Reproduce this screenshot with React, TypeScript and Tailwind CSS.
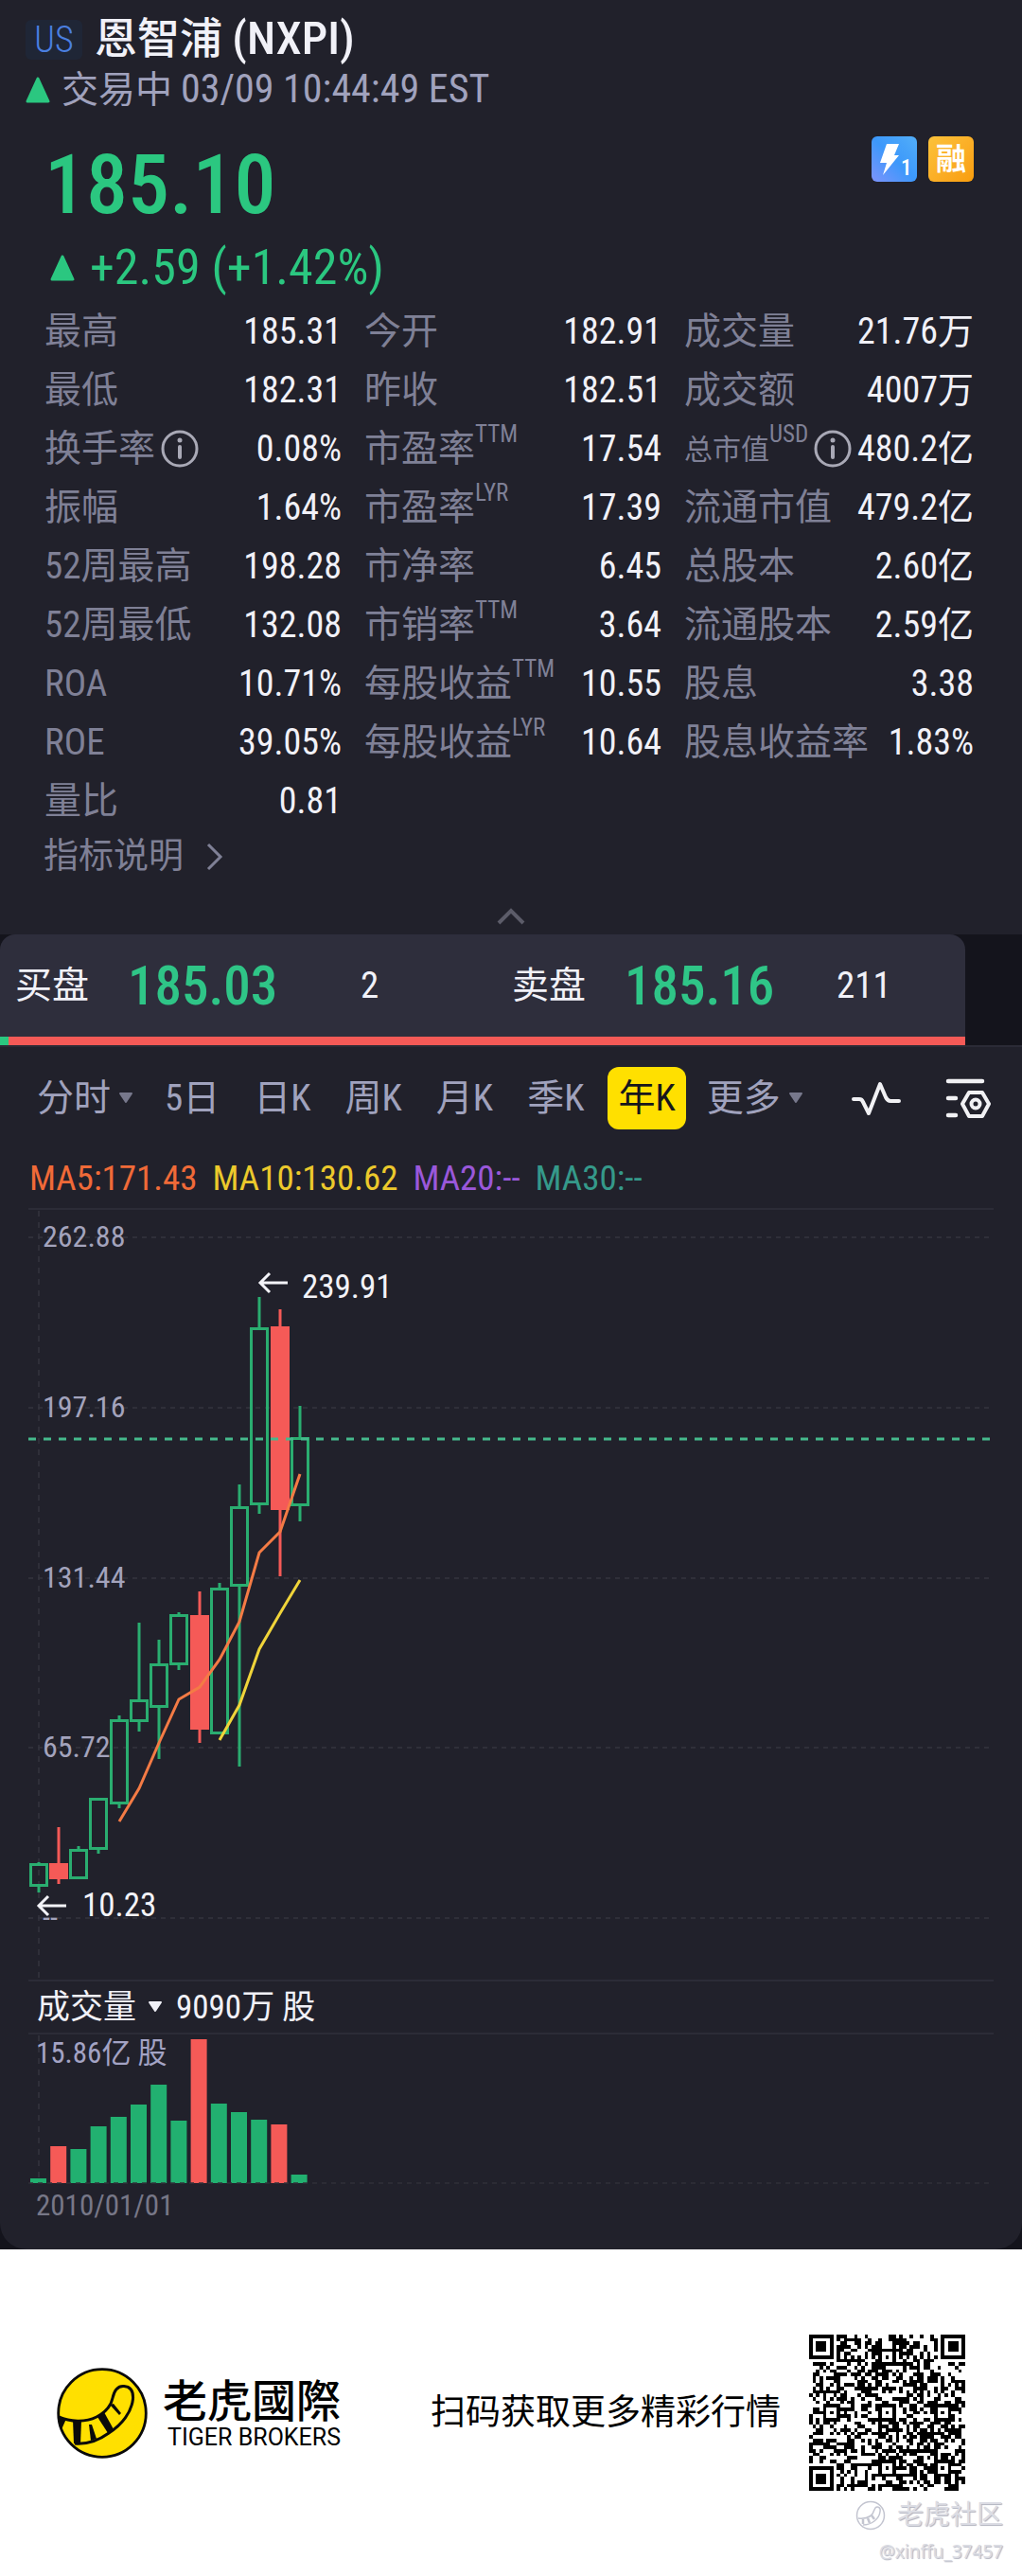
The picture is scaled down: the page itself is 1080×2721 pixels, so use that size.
type Metric = { label: string; value: string; sup?: string; info?: boolean; small?: boolean };

const metrics: Metric[] = [
  { label: "最高", value: "185.31" },
  { label: "今开", value: "182.91" },
  { label: "成交量", value: "21.76万" },
  { label: "最低", value: "182.31" },
  { label: "昨收", value: "182.51" },
  { label: "成交额", value: "4007万" },
  { label: "换手率", value: "0.08%", info: true },
  { label: "市盈率", value: "17.54", sup: "TTM" },
  { label: "总市值", value: "480.2亿", sup: "USD", info: true, small: true },
  { label: "振幅", value: "1.64%" },
  { label: "市盈率", value: "17.39", sup: "LYR" },
  { label: "流通市值", value: "479.2亿" },
  { label: "52周最高", value: "198.28" },
  { label: "市净率", value: "6.45" },
  { label: "总股本", value: "2.60亿" },
  { label: "52周最低", value: "132.08" },
  { label: "市销率", value: "3.64", sup: "TTM" },
  { label: "流通股本", value: "2.59亿" },
  { label: "ROA", value: "10.71%" },
  { label: "每股收益", value: "10.55", sup: "TTM" },
  { label: "股息", value: "3.38" },
  { label: "ROE", value: "39.05%" },
  { label: "每股收益", value: "10.64", sup: "LYR" },
  { label: "股息收益率", value: "1.83%" },
  { label: "量比", value: "0.81" },
];

const tabs = ["5日", "日K", "周K", "月K", "季K", "年K"];

const UP = "#2aad70";
const DOWN = "#f55a57";

/* x, high, body top, body bottom, low, rising */
const candles: [number, number, number, number, number, boolean][] = [
  [41, 691, 692, 716, 723, true],
  [62, 654, 692, 708, 714, false],
  [83, 674, 677, 708, 708, true],
  [104, 623, 623, 677, 682, true],
  [126, 536, 540, 629, 634, true],
  [147, 438, 519, 542, 553, true],
  [168, 456, 481, 527, 582, true],
  [189, 427, 429, 482, 488, true],
  [211, 405, 430, 550, 565, false],
  [232, 396, 401, 555, 555, true],
  [253, 292, 315, 399, 590, true],
  [274, 94, 126, 313, 323, true],
  [296, 107, 125, 318, 389, false],
  [317, 209, 242, 314, 331, true],
];

/* bar top, rising; all bars stand on y = 159 */
const volumes: [number, boolean][] = [
  [154, true], [120, false], [123, true], [99, true], [89, true], [76, true], [55, true],
  [93, true], [7, false], [75, true], [84, true], [92, true], [97, false], [150, true],
];

const gridLines: [number, string][] = [
  [31, "262.88"],
  [211, "197.16"],
  [391, "131.44"],
  [570, "65.72"],
  [750, "--"],
];

function TriangleUp({ className }: { className?: string }) {
  return (
    <svg viewBox="0 0 26 28" className={className} aria-hidden="true">
      <path d="M13 2 L24 26 H2 Z" fill="#2bc780" stroke="#2bc780" strokeWidth="3" strokeLinejoin="round" />
    </svg>
  );
}

function TriangleDown({ className }: { className?: string }) {
  return (
    <svg viewBox="0 0 16 12" className={className} aria-hidden="true">
      <path d="M2 1 H14 L8 10 Z" fill="currentColor" stroke="currentColor" strokeWidth="2" strokeLinejoin="round" />
    </svg>
  );
}

function InfoIcon() {
  return (
    <svg viewBox="0 0 40 40" className="size-10 shrink-0" fill="none" stroke="#a9a9b6" aria-hidden="true">
      <circle cx="20" cy="20" r="18" strokeWidth="3" />
      <circle cx="20" cy="11" r="2.5" fill="#a9a9b6" stroke="none" />
      <path d="M20 18 V29" strokeWidth="4" strokeLinecap="round" />
    </svg>
  );
}

function MetricCell({ m }: { m: Metric }) {
  return (
    <div className="flex h-[62px] items-center justify-between whitespace-nowrap">
      <dt className="flex h-full items-center text-[#7f8096]">
        <span className={m.small ? "text-[30px]" : "text-[39px]"}>{m.label}</span>
        {m.sup && <sup className="top-0 self-start text-[25px] leading-8">{m.sup}</sup>}
        {m.info && (
          <button type="button" aria-label={m.label + "说明"} className="ml-1.5">
            <InfoIcon />
          </button>
        )}
      </dt>
      <dd className="text-[38px] text-[#f1f1f8]">{m.value}</dd>
    </div>
  );
}

function PriceChart() {
  return (
    <svg viewBox="0 0 1080 817" className="block h-auto w-full" role="img" aria-label="年K">
      <g stroke="#35353f" strokeWidth="1.5" fill="none">
        <path d="M30 1 H1050 M30 816 H1050" stroke="#30303c" />
        <path d="M41 3 V816" strokeDasharray="6 6" />
        {gridLines.map(([y]) => (
          <path key={y} d={`M30 ${y} H1050`} strokeDasharray="5 5" />
        ))}
      </g>
      <g fill="#a3a3bc" fontSize="32">
        {gridLines.map(([y, t]) => (
          <text key={y} x="45" y={y + 10}>{t}</text>
        ))}
      </g>
      {candles.map(([x, high, top, bottom, low, up]) => (
        <g key={x} stroke={up ? UP : DOWN} strokeWidth="3" fill={up ? "none" : DOWN}>
          <path d={`M${x} ${high} V${top} M${x} ${bottom} V${low}`} />
          <rect x={x - 8.5} y={top + 1.5} width="17" height={bottom - top - 2} />
        </g>
      ))}
      <path d="M30 244 H1050" stroke="#45b98c" strokeWidth="3" strokeDasharray="8 8" />
      <polyline
        points="126,648 147,613 168,565 189,519 211,506 232,477 253,437 274,364 296,342 317,281"
        fill="none" stroke="#f47b45" strokeWidth="3"
      />
      <polyline points="232,562 253,525 274,466 296,428 317,393" fill="none" stroke="#f0d43a" strokeWidth="3" />
      <g fill="none" stroke="#f3f3f8" strokeWidth="3">
        <path d="M304 79 H275 M285 69 L275 79 L285 89" />
        <path d="M70 737 H41 M51 727 L41 737 L51 747" />
      </g>
      <g fill="#f3f3f8" fontSize="35">
        <text x="319" y="95">239.91</text>
        <text x="87" y="748">10.23</text>
      </g>
    </svg>
  );
}

function VolumeChart() {
  return (
    <svg viewBox="0 0 1080 163" className="block h-auto w-full" role="img" aria-label="成交量">
      <g stroke="#35353f" strokeWidth="1.5" fill="none">
        <path d="M30 1 H1050" stroke="#30303c" />
        <path d="M41 3 V159" strokeDasharray="6 6" />
      </g>
      {volumes.map(([top, up], i) => (
        <rect key={i} x={32 + i * 21.2} y={top} width="17" height={159 - top} fill={up ? "#22b070" : DOWN} />
      ))}
      <path d="M30 159 H1050" stroke="#30303a" strokeWidth="1.5" strokeDasharray="5 5" />
      <text x="38" y="32" fontSize="31" fill="#a3a3c4">15.86亿 股</text>
    </svg>
  );
}

const QR_SIZE = 45;

function qrModule(r: number, c: number): boolean {
  const far = QR_SIZE - 7;
  for (const [fr, fc] of [[0, 0], [0, far], [far, 0]]) {
    const dr = r - fr;
    const dc = c - fc;
    if (dr >= -1 && dr <= 7 && dc >= -1 && dc <= 7) {
      const d = Math.max(Math.abs(dr - 3), Math.abs(dc - 3));
      return d === 3 || d <= 1;
    }
  }
  for (const ar of [6, 22, 38]) {
    for (const ac of [6, 22, 38]) {
      if ((ar === 6 && ac !== 22) || (ac === 6 && ar !== 22)) continue;
      const d = Math.max(Math.abs(r - ar), Math.abs(c - ac));
      if (d <= 2) return d !== 1;
    }
  }
  if (r === 6) return c % 2 === 0;
  if (c === 6) return r % 2 === 0;
  let h = Math.imul(r * 61 + 17, 374761393) ^ Math.imul(c * 37 + 5, 668265263);
  h = Math.imul(h ^ (h >>> 13), 1274126177);
  return ((h ^ (h >>> 16)) & 255) < 130;
}

function QrCode() {
  let d = "";
  for (let r = 0; r < QR_SIZE; r++) {
    for (let c = 0; c < QR_SIZE; c++) {
      if (qrModule(r, c)) d += `M${c} ${r}h1v1h-1z`;
    }
  }
  return (
    <svg viewBox="0 0 45 45" className="w-[165px] shrink-0" shapeRendering="crispEdges" role="img" aria-label="二维码">
      <path d={d} fill="#000" />
    </svg>
  );
}

function TigerLogo() {
  return (
    <svg viewBox="0 0 96 96" className="size-24 shrink-0" aria-hidden="true">
      <circle cx="48" cy="48" r="46.3" fill="#ffe000" stroke="#0a0a0a" strokeWidth="2.8" />
      <path
        d="M2 52 C14 57 30 58 42 52 C52 47 57 41 59 32 C61 23 65 19 71 19.5 C78 20 81 25 80.5 33 C79 47 69 60 55 69 C44 77 31 81 19 80"
        fill="none" stroke="#0a0a0a" strokeWidth="3" strokeLinejoin="round"
      />
      <path d="M2 51 L10 54 L6 63 L5 66 Z" fill="#0a0a0a" />
      <path d="M17 55 L26 56 L25 81 L18 80 Z" fill="#0a0a0a" />
      <path d="M34 60 L37 60 L42 75 L36 77 Z" fill="#0a0a0a" />
      <path d="M43 52 L50 47 L60 65 L54 69 Z" fill="#0a0a0a" />
      <path d="M56 39 L60 38 L68 48 L66 50 Z" fill="#0a0a0a" />
    </svg>
  );
}

export default function App() {
  return (
    <main className="bg-[#14141c] font-['Roboto_Condensed','Noto_Sans_CJK_SC',sans-serif] text-[#f1f1f8]">
      <div className="rounded-b-[28px] bg-[#21212b]">
        <header className="pl-[27px]">
          <div className="flex h-[66px] items-center gap-[13px] pt-[17px]">
            <span className="flex h-[42px] w-[60px] items-center justify-center rounded-md bg-[#1f2636] text-[38px] leading-none font-light text-[#4a7fe0]">US</span>
            <h1 className="text-[45px] font-medium">
              恩智浦 <span className="text-[49px] leading-none">(NXPI)</span>
            </h1>
          </div>
          <p className="flex h-[58px] items-center gap-3 text-[39px] text-[#a0a2bd]">
            <TriangleUp className="w-[26px]" />
            <span>
              交易中 <span className="text-[42px] leading-none">03/09 10:44:49 EST</span>
            </span>
          </p>
        </header>

        <section className="flex items-start justify-between pt-5 pr-[51px] pl-[47px] text-[#2bc780]">
          <div>
            <p className="text-[88px] leading-[102px] font-medium">185.10</p>
            <p className="flex h-[73px] items-center gap-4 pl-1.5 text-[52px]">
              <TriangleUp className="w-[26px]" />
              <span>+2.59 (+1.42%)</span>
            </p>
          </div>
          <div className="flex gap-3">
            <svg viewBox="0 0 48 48" className="size-12" role="img" aria-label="Level 1">
              <defs>
                <linearGradient id="lv" x1="0" y1="1" x2="1" y2="0">
                  <stop offset="0" stopColor="#7d93fb" />
                  <stop offset="0.5" stopColor="#3c98fb" />
                  <stop offset="1" stopColor="#52aef8" />
                </linearGradient>
              </defs>
              <rect width="48" height="48" rx="6" fill="url(#lv)" />
              <path d="M16 8 H29 L24 20 H29 L12 41 L16 28 H9 Z" fill="#fff" />
              <text x="31" y="41" fontSize="23" fontWeight="500" fill="#fff">1</text>
            </svg>
            <span className="flex size-12 items-center justify-center rounded-md bg-linear-to-br from-[#fcc23a] to-[#f99d0a] text-[32px] leading-none font-bold text-white">融</span>
          </div>
        </section>

        <dl className="grid grid-cols-[314fr_314fr_306fr] gap-x-6 pr-[51px] pl-[47px]">
          {metrics.map((m, i) => (
            <MetricCell key={i} m={m} />
          ))}
        </dl>

        <a href="#indicators" className="ml-[46px] inline-flex h-14 items-center gap-6 text-[37px] text-[#7f8096]">
          指标说明
          <svg viewBox="0 0 18 30" className="w-[18px]" fill="none" stroke="currentColor" strokeWidth="3" aria-hidden="true">
            <path d="M2 2 L15 15 L2 28" />
          </svg>
        </a>

        <div className="flex h-[54px] items-end justify-center pb-2.5">
          <button type="button" aria-label="收起">
            <svg viewBox="0 0 30 18" className="block w-[30px]" fill="none" stroke="#5c5c69" strokeWidth="4" aria-hidden="true">
              <path d="M2 16 L15 3 L28 16" />
            </svg>
          </button>
        </div>

        <section className="bg-[#14141c]">
          <div className="mr-[60px] overflow-hidden rounded-t-[16px] bg-[#2e2e3c]">
            <div className="grid h-[108px] grid-cols-[525fr_495fr] items-center text-[39px]">
              <div className="flex items-center pl-4">
                <span className="w-[119px]">买盘</span>
                <span className="w-[246px] text-[57px] leading-none font-medium text-[#2fc587]">185.03</span>
                <span>2</span>
              </div>
              <div className="flex items-center pl-4">
                <span className="w-[119px]">卖盘</span>
                <span className="w-[224px] text-[57px] leading-none font-medium text-[#2fc587]">185.16</span>
                <span>211</span>
              </div>
            </div>
            <div className="flex h-[9px] bg-[#f55a57]">
              <div className="w-[9px] bg-[#2bc780]" />
            </div>
          </div>
        </section>

        <nav className="flex h-[110px] items-center justify-between border-t-2 border-[#2b2b36] pr-[33px] pl-[31px] text-[39px] whitespace-nowrap text-[#a0a2bd]">
          <div className="flex items-center gap-3.5">
            <button type="button" className="flex items-center gap-2 px-2">
              分时
              <TriangleDown className="w-4 text-[#77788c]" />
            </button>
            {tabs.map((t) => (
              <button
                key={t}
                type="button"
                className={t === "年K" ? "h-[66px] rounded-xl bg-[#ffe000] px-[11px] text-[#16161c]" : "h-[66px] px-[11px]"}
              >
                {t}
              </button>
            ))}
            <button type="button" className="flex items-center gap-2 px-2">
              更多
              <TriangleDown className="w-4 text-[#77788c]" />
            </button>
          </div>
          <div className="flex items-center gap-[46px]">
            <button type="button" aria-label="指标">
              <svg viewBox="0 0 54 38" className="w-[54px]" fill="none" stroke="#f1f1f4" strokeWidth="4" strokeLinecap="round" strokeLinejoin="round" aria-hidden="true">
                <path d="M3 20 H9 Q12 20 13 23 L19 35 L31 4 L37 18 Q39 22 42 22 H51" />
              </svg>
            </button>
            <button type="button" aria-label="设置">
              <svg viewBox="0 0 48 44" className="w-12" fill="none" stroke="#f1f1f4" strokeWidth="4.5" strokeLinecap="round" strokeLinejoin="round" aria-hidden="true">
                <path d="M3 4 H39 M3 22 H11 M3 40 H11" />
                <path d="M25 16 H39 L46 28 L39 41 H25 L18 28 Z" strokeWidth="4" />
                <circle cx="32" cy="28" r="4.5" strokeWidth="4" />
              </svg>
            </button>
          </div>
        </nav>

        <div className="flex h-[62px] items-center gap-4 pl-[31px] text-[37px]">
          <span className="text-[#f06a38]">MA5:171.43</span>
          <span className="text-[#ecc92c]">MA10:130.62</span>
          <span className="text-[#9a58da]">MA20:--</span>
          <span className="text-[#35998a]">MA30:--</span>
        </div>

        <PriceChart />

        <div className="flex h-[54px] items-center gap-[14px] pl-[39px] text-[35px] leading-none">
          <button type="button" className="flex items-center gap-3">
            成交量
            <TriangleDown className="w-4" />
          </button>
          <span>9090万 股</span>
        </div>

        <VolumeChart />

        <p className="h-[66px] pl-[38px] text-[31px] leading-10 text-[#777787]">2010/01/01</p>
      </div>

      <footer className="relative flex h-[345px] items-center justify-between bg-white px-[60px] text-black">
        <div className="flex items-center gap-4">
          <TigerLogo />
          <div className="flex flex-col items-end">
            <p className="font-['Noto_Sans_CJK_TC',sans-serif] text-[47px] leading-[52px] font-medium">老虎國際</p>
            <p className="font-['Roboto',sans-serif] text-[25px] leading-8">TIGER BROKERS</p>
          </div>
        </div>
        <div className="flex items-center gap-[30px]">
          <p className="text-[37px]">扫码获取更多精彩行情</p>
          <QrCode />
        </div>
        <div className="absolute right-5 bottom-2 flex flex-col items-end text-[#dcdde4] [text-shadow:1px_1px_1px_#b0b2be]">
          <p className="flex items-center gap-3 text-[28px] leading-10">
            <svg viewBox="0 0 32 32" className="size-8" fill="none" stroke="#c3c5d0" strokeWidth="1.5" aria-hidden="true">
              <circle cx="16" cy="16" r="14.5" />
              <path d="M3 19 C12 20 18 17 20 10 C22 5 27 7 26 12 C25 20 17 26 8 26" />
              <path d="M8 20 V25 M13 19 L15 24 M17 16 L20 20" strokeWidth="2.5" />
            </svg>
            老虎社区
          </p>
          <p className="font-['Noto_Sans',sans-serif] text-[19px] leading-9">@xinffu_37457</p>
        </div>
      </footer>
    </main>
  );
}
